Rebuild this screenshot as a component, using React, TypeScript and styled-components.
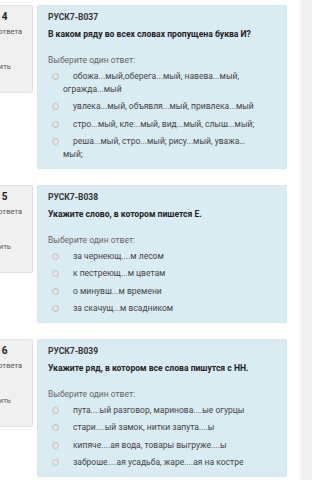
import React from "react";
import styled, { createGlobalStyle } from "styled-components";

const Global = createGlobalStyle`
  html, body { margin: 0; padding: 0; background: #ffffff; }
  body { overflow: hidden; font-family: Roboto, "Noto Sans", "Liberation Sans", sans-serif; }
  * { box-sizing: border-box; }
`;

const Page = styled.div`
  display: flex;
  width: 312px;
  height: 480px;
  overflow: hidden;
`;

const Main = styled.main`
  flex: 1;
  min-width: 0;
  padding: 5px 12px 0 0;
  display: flex;
  flex-direction: column;
  gap: 16px;
`;

const Aside = styled.aside`
  width: 13px;
  flex-shrink: 0;
  background: #f0f0f0;
  border-left: 2px solid #f7f7f7;
`;

const Question = styled.section`
  display: flex;
  align-items: flex-start;
  gap: 4px;
`;

const Info = styled.div`
  width: 74px;
  flex-shrink: 0;
  margin-left: -41px;
  padding: 5px 5px 10px;
  background: #f0f0f0;
  border: 1px solid #e2e2e2;
  border-radius: 2px;
  color: #555;
`;

const QNo = styled.h3`
  margin: 0;
  font-size: 10px;
  line-height: 11px;
  font-weight: 700;
  color: #222;
  white-space: nowrap;
`;

const State = styled.div`
  margin-top: 4.5px;
  font-size: 7.5px;
  line-height: 10px;
  white-space: nowrap;
`;

const Grade = styled.div`
  margin-top: 6.5px;
  font-size: 7.5px;
  line-height: 10px;
  white-space: nowrap;
`;

const Flag = styled.div`
  margin-top: 7.5px;
  font-size: 7.5px;
  line-height: 10px;
`;

const FlagIcon = styled.svg`
  width: 9px;
  height: 9px;
  margin-right: 3px;
  vertical-align: -1px;
`;

const Formulation = styled.div`
  flex: 1;
  min-width: 0;
  padding: 6px 26px 7px 10px;
  background: #d9ecf2;
  border: 1px solid #d3e6ec;
  border-radius: 2px;
`;

const Code = styled.div`
  font-size: 8.5px;
  line-height: 11px;
  font-weight: 700;
  color: #333;
`;

const QText = styled.div`
  margin-top: 5px;
  font-size: 8.6px;
  line-height: 12px;
  font-weight: 700;
  color: #222;
`;

const Prompt = styled.div`
  margin-top: 14px;
  font-size: 8.5px;
  line-height: 12px;
  color: #666;
`;

const Answers = styled.div`
  margin-top: 3.5px;
  display: flex;
  flex-direction: column;
  gap: 4.5px;
`;

const Option = styled.label`
  display: block;
  margin-left: 15px;
  text-indent: -11px;
  font-size: 8.5px;
  line-height: 13px;
  color: #444;
`;

const Radio = styled.input`
  appearance: none;
  display: inline-block;
  width: 7px;
  height: 7px;
  margin: 0 14px 0 0;
  border: 1px solid #c2c2c2;
  border-radius: 50%;
  background: #e4e4e4;
  vertical-align: -1px;
`;

type Q = { n: number; code: string; text: string; options: string[] };

const questions: Q[] = [
  {
    n: 4,
    code: "РУСК7-В037",
    text: "В каком ряду во всех словах пропущена буква И?",
    options: [
      "обожа...мый,оберега...мый, навева...мый, огражда...мый",
      "увлека...мый, объявля...мый, привлека...мый",
      "стро...мый, кле...мый, вид...мый, слыш...мый;",
      "реша...мый, стро...мый; рису...мый, уважа…мый;",
    ],
  },
  {
    n: 5,
    code: "РУСК7-В038",
    text: "Укажите слово, в котором пишется Е.",
    options: [
      "за чернеющ....м лесом",
      "к пестреющ...м цветам",
      "о минувш...м времени",
      "за скачущ...м всадником",
    ],
  },
  {
    n: 6,
    code: "РУСК7-В039",
    text: "Укажите ряд, в котором все слова пишутся с НН.",
    options: [
      "пута....ый разговор, маринова....ые огурцы",
      "стари....ый замок, нитки запута....ы",
      "кипяче....ая вода, товары выгруже....ы",
      "заброше....ая усадьба, жаре....ая на костре",
    ],
  },
];

export default function App() {
  return (
    <>
      <Global />
      <Page>
        <Main>
          {questions.map((q) => (
            <Question key={q.n}>
              <Info>
                <QNo>Вопрос {q.n}</QNo>
                <State>Пока нет ответа</State>
                <Grade>Балл: 1</Grade>
                <Flag>
                  <FlagIcon viewBox="0 0 10 10">
                    <path d="M2 1v8M2 1.5h6l-1.5 2 1.5 2H2" fill="none" stroke="#999" strokeWidth="1" />
                  </FlagIcon>
                  Отметить вопрос
                </Flag>
              </Info>
              <Formulation>
                <Code>{q.code}</Code>
                <QText>{q.text}</QText>
                <Prompt>Выберите один ответ:</Prompt>
                <Answers>
                  {q.options.map((o, i) => (
                    <Option key={i}>
                      <Radio type="radio" name={`q${q.n}`} />
                      {o}
                    </Option>
                  ))}
                </Answers>
              </Formulation>
            </Question>
          ))}
        </Main>
        <Aside />
      </Page>
    </>
  );
}
